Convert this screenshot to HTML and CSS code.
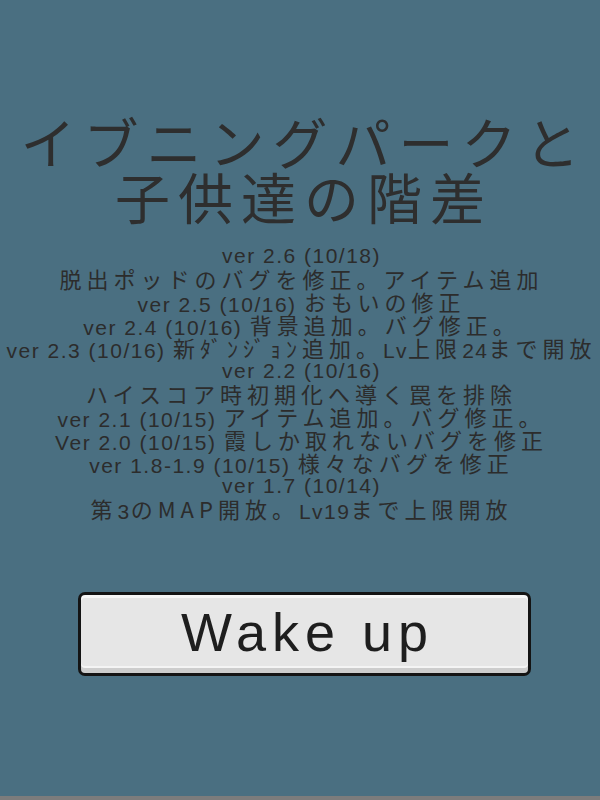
FILE: index.html
```html
<!DOCTYPE html>
<html lang="ja">
<head>
<meta charset="utf-8">
<title>イブニングパークと子供達の階差</title>
<link rel="stylesheet" href="styles.css">
</head>
<body>
<div class="screen">
  <h1 class="title">
    <span class="title-line">イブニングパークと</span>
    <span class="title-line">子供達の階差</span>
  </h1>
  <div class="notes">
    <p class="note">ver 2.6 (10/18)</p>
    <p class="note"><span class="j">脱出ポッドのバグを修正。アイテム追加</span></p>
    <p class="note">ver 2.5 (10/16) <span class="j">おもいの修正</span></p>
    <p class="note">ver 2.4 (10/16) <span class="j">背景追加。バグ修正。</span></p>
    <p class="note">ver 2.3 (10/16) <span class="j">新ﾀﾞﾝｼﾞｮﾝ追加。</span>Lv<span class="j">上限</span>24<span class="j">まで開放</span></p>
    <p class="note">ver 2.2 (10/16)</p>
    <p class="note"><span class="j">ハイスコア時初期化へ導く罠を排除</span></p>
    <p class="note">ver 2.1 (10/15) <span class="j">アイテム追加。バグ修正。</span></p>
    <p class="note">Ver 2.0 (10/15) <span class="j">霞しか取れないバグを修正</span></p>
    <p class="note">ver 1.8-1.9 (10/15) <span class="j">様々なバグを修正</span></p>
    <p class="note">ver 1.7 (10/14)</p>
    <p class="note"><span class="j">第</span>3<span class="j">のMAP開放。</span>Lv19<span class="j">まで上限開放</span></p>
  </div>
  <button class="wake" type="button">Wake up</button>
</div>
<div class="footer-strip"></div>
</body>
</html>
```

FILE: styles.css
```css
html, body {
  margin: 0;
  padding: 0;
}

body {
  width: 600px;
  height: 800px;
  background: #4a6f81;
  overflow: hidden;
  font-family: "Liberation Sans", "Noto Sans CJK JP", sans-serif;
  color: #2c2c2c;
  display: flex;
  flex-direction: column;
}

.screen {
  flex: 1;
  display: flex;
  flex-direction: column;
  align-items: center;
  padding-top: 113px;
  overflow: hidden;
}

.title {
  margin: 0;
  display: flex;
  flex-direction: column;
  align-items: center;
  font-family: "Noto Sans CJK JP", sans-serif;
  font-weight: 400;
  font-size: 55px;
  line-height: 55px;
  letter-spacing: 8px;
  color: #2e2e2e;
}

.title-line {
  white-space: nowrap;
  height: 55px;
  padding-left: 8px;
}

.notes {
  margin-top: 21px;
  display: flex;
  flex-direction: column;
  align-items: center;
}

.note {
  margin: 0;
  white-space: nowrap;
  height: 23px;
  font-size: 21px;
  line-height: 23px;
  letter-spacing: 1.5px;
  padding-left: 3px;
}

.j {
  font-family: "Noto Sans CJK JP", sans-serif;
  font-size: 22px;
  line-height: 22px;
  letter-spacing: 5px;
  vertical-align: 1px;
}

.wake {
  margin-top: 72px;
  width: 453px;
  height: 84px;
  margin-left: 9px;
  background: #e6e6e6;
  border: 3px solid #141414;
  border-radius: 7px;
  box-shadow: inset 0 3px 0 #f7f7f7, inset 0 -5px 0 #cdcdcd, inset 0 -7px 0 #f4f4f4;
  font-family: "Liberation Sans", sans-serif;
  font-size: 54px;
  letter-spacing: 6px;
  padding: 0 0 4px 6px;
  color: #1e1e1e;
  cursor: pointer;
}

.footer-strip {
  height: 4px;
  background: #7c7c7c;
}
```
